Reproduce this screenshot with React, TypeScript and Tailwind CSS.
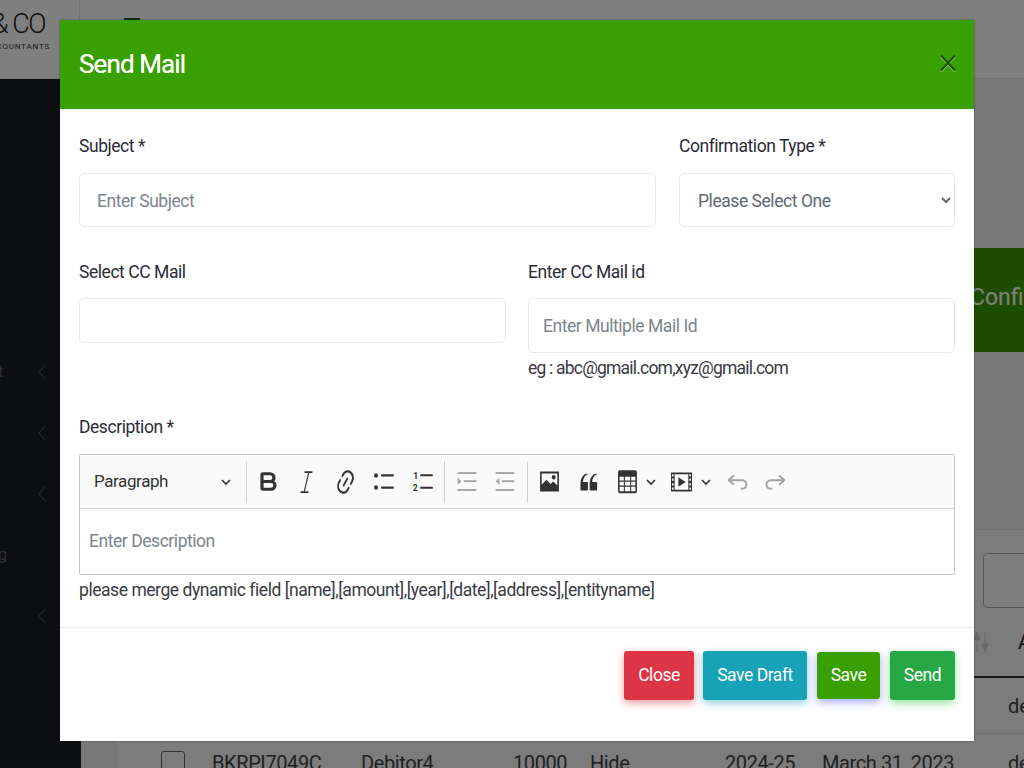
import React from "react";
import { Bold, Italic } from "lucide-react";

const F = "font-['Roboto',sans-serif]";

function Chevron() {
  return (
    <svg width="10" height="16" viewBox="0 0 10 16" fill="none" stroke="#4a4b4d" strokeWidth="1.2">
      <path d="M8 1 L2 8 L8 15" />
    </svg>
  );
}

function SideRow({ ch, arrow }: { ch: string; arrow?: boolean }) {
  return (
    <div className="flex h-[61px] items-center text-[16px] text-[#5f6062]">
      <span className="flex w-[37px] justify-start overflow-hidden">
        <span className="-ml-[2px]">{ch}</span>
      </span>
      <span className="flex">{arrow && <Chevron />}</span>
    </div>
  );
}

function Slot({ children, w = 38 }: { children: React.ReactNode; w?: number }) {
  return (
    <div className="flex h-[40px] shrink-0 items-center justify-center" style={{ width: w }}>
      {children}
    </div>
  );
}

const Sep = () => <div className="h-[42px] w-px shrink-0 bg-[#d2d2d2]" />;

function Caret() {
  return (
    <svg width="10" height="10" viewBox="0 0 10 10" fill="none" stroke="#333" strokeWidth="1.6" className="shrink-0">
      <path d="M1 3 L5 7 L9 3" />
    </svg>
  );
}

function I20({ children, c = "#333", w = 23, h = 27 }: { children: React.ReactNode; c?: string; w?: number; h?: number }) {
  return (
    <svg width={w} height={h} viewBox="0 0 20 20" fill={c} preserveAspectRatio="none">
      {children}
    </svg>
  );
}

function Toolbar() {
  return (
    <div className="flex h-[54px] items-center border-b border-[#d6d6d6] bg-[#fafafa]">
      <div className="flex w-[166px] shrink-0 items-center pl-[14px] pr-[15px] text-[17px] tracking-[-0.4px] text-[#333]">
        <span className="flex-1">Paragraph</span>
        <Caret />
      </div>
      <Sep />
      <div className="ml-[2px] flex items-center">
        <Slot><Bold width={24} height={23} preserveAspectRatio="none" strokeWidth={3.2} color="#333" /></Slot>
        <Slot w={39}><Italic width={19} height={30} preserveAspectRatio="none" strokeWidth={1.4} color="#333" /></Slot>
        <Slot>
          <I20 w={23} h={30}><path d="m11.077 15 .991-1.416a.75.75 0 1 1 1.229.86l-1.148 1.64a.748.748 0 0 1-.217.206 5.251 5.251 0 0 1-8.503-5.955.741.741 0 0 1 .12-.274l1.147-1.639a.75.75 0 1 1 1.228.86L4.933 10.7l.006.003a3.75 3.75 0 0 0 6.132 4.294l.006.004zm5.494-5.335a.748.748 0 0 1-.12.274l-1.147 1.639a.75.75 0 1 1-1.228-.86l.86-1.23a3.75 3.75 0 0 0-6.144-4.301l-.86 1.229a.75.75 0 0 1-1.229-.86l1.148-1.64a.748.748 0 0 1 .217-.206 5.251 5.251 0 0 1 8.503 5.955zm-4.563-2.532a.75.75 0 0 1 .184 1.045l-3.155 4.505a.75.75 0 1 1-1.229-.86l3.155-4.506a.75.75 0 0 1 1.045-.184z" /></I20>
        </Slot>
        <Slot w={39}>
          <I20 w={23} h={27}>
            <circle cx="3.5" cy="5.500" r="1.700" />
            <circle cx="3.500" cy="14.500" r="1.700" />
            <rect x="8" y="4.700" width="11" height="1.600" rx=".5" />
            <rect x="8" y="13.700" width="11" height="1.600" rx=".5" />
          </I20>
        </Slot>
        <Slot>
          <I20 w={23} h={25}>
            <text x="2" y="8" fontSize="7.500" fontWeight="700" fontFamily="Roboto">1</text>
            <text x="1.500" y="18" fontSize="7.500" fontWeight="700" fontFamily="Roboto">2</text>
            <rect x="8" y="4.200" width="11" height="1.600" rx=".5" />
            <rect x="8" y="14.200" width="11" height="1.600" rx=".5" />
          </I20>
        </Slot>
      </div>
      <div className="ml-[3px]"><Sep /></div>
      <div className="ml-[3px] flex items-center">
        <Slot>
          <I20 c="#a3a3a3" w={22} h={25}>
            <rect x="1.500" y="2.500" width="17" height="1.500" />
            <rect x="7" y="9" width="11.500" height="1.500" />
            <rect x="1.500" y="16" width="17" height="1.500" />
            <path d="M1.500 7 L5 9.750 L1.500 12.500 Z" />
          </I20>
        </Slot>
        <Slot>
          <I20 c="#a3a3a3" w={22} h={25}>
            <rect x="1.500" y="2.500" width="17" height="1.500" />
            <rect x="7" y="9" width="11.500" height="1.500" />
            <rect x="1.500" y="16" width="17" height="1.500" />
            <path d="M5 7 L1.500 9.750 L5 12.500 Z" />
          </I20>
        </Slot>
      </div>
      <div className="ml-[3px]"><Sep /></div>
      <div className="ml-[2px] flex items-center">
        <Slot>
          <I20 w={21} h={25}>
            <path fillRule="evenodd" d="M1 2h18v16H1z M2.500 3.500v9l4.500-4 4 3.500 2.500-2 4 3.200V3.500z" />
            <circle cx="14" cy="6.500" r="1.800" />
          </I20>
        </Slot>
        <Slot w={40}>
          <I20 w={23} h={28}><path d="M3 10.423a6.500 6.500 0 0 1 6.056-6.408l.038.67C6.448 5.423 5.354 7.663 5.220 10H9c.552 0 .5.432.5.986v4.511c0 .554-.448.503-1 .503h-5c-.552 0-.5-.449-.5-1.003v-4.574zm8 0a6.500 6.500 0 0 1 6.056-6.408l.038.67c-2.646.739-3.740 2.979-3.873 5.315H17c.552 0 .5.432.5.986v4.511c0 .554-.448.503-1 .503h-5c-.552 0-.5-.449-.5-1.003v-4.574z" /></I20>
        </Slot>
        <Slot w={38}>
          <I20 w={21} h={25.5}>
            <path fillRule="evenodd" d="M2.500 1h15A1.500 1.500 0 0 1 19 2.500v15a1.500 1.500 0 0 1-1.500 1.500h-15A1.500 1.500 0 0 1 1 17.500v-15A1.500 1.500 0 0 1 2.500 1z M2.500 6v3h4V6z M7.500 6v3h5V6z M13.500 6v3h4V6z M2.500 10v3h4v-3z M7.500 10v3h5v-3z M13.500 10v3h4v-3z M2.500 14v3.500h4V14z M7.500 14v3.500h5V14z M13.500 14v3.500h4V14z" />
          </I20>
        </Slot>
        <div className="mr-[15px] flex"><Caret /></div>
        <I20 w={21} h={24}>
          <path fillRule="evenodd" d="M0 2h20v16H0z M3.500 3.500v13h13v-13z M1 3.500v2h1.500v-2z M1 7v2h1.500V7z M1 11v2h1.500v-2z M1 14.500v2h1.500v-2z M17.500 3.500v2H19v-2z M17.500 7v2H19V7z M17.500 11v2H19v-2z M17.500 14.500v2H19v-2z" />
          <path d="M7 6 L14 10 L7 14 Z" />
        </I20>
        <div className="ml-[9px] flex"><Caret /></div>
        <div className="ml-[11px]">
          <Slot w={30}>
            <I20 c="#a3a3a3" w={25} h={26}><path d="m5.042 9.367 2.189 1.837a.75.75 0 0 1-.965 1.149l-3.788-3.18a.747.747 0 0 1-.21-.284.75.75 0 0 1 .17-.945L6.23 4.762a.75.75 0 1 1 .964 1.15L4.863 7.866h8.917A.75.75 0 0 1 14 7.9a4 4 0 1 1-1.477 7.718l.344-1.489a2.5 2.5 0 1 0 1.094-4.73l.008-.032H5.042z" /></I20>
          </Slot>
        </div>
        <div className="ml-[8px]">
          <Slot w={30}>
            <I20 c="#a3a3a3" w={25} h={26}><path d="m14.958 9.367-2.189 1.837a.75.75 0 0 0 .965 1.149l3.788-3.18a.747.747 0 0 0 .21-.284.75.75 0 0 0-.17-.945L13.77 4.762a.75.75 0 1 0-.964 1.15l2.331 1.955H6.22A.75.75 0 0 0 6 7.9a4 4 0 1 0 1.477 7.718l-.344-1.489A2.5 2.5 0 1 1 6.039 9.4l-.008-.032h8.927z" /></I20>
          </Slot>
        </div>
      </div>
    </div>
  );
}

const label = "block h-[26px] text-[17.5px] leading-[27px] tracking-[-0.45px] text-[#2b2b36]";
const field =
  "block w-full rounded-[5px] border border-[#e8e8ee] bg-white pt-[1px] text-[17.5px] tracking-[-0.45px] text-[#5f6770] outline-none placeholder:text-[#7c858d]";
const hint = "mt-[2px] h-[26px] text-[17.5px] leading-[27px] tracking-[-0.45px] text-[#3a3a42]";

function Btn({ children, cls }: { children: React.ReactNode; cls: string }) {
  return (
    <button className={`flex h-[49px] items-center justify-center rounded-[3px] text-[17.5px] tracking-[-0.45px] text-white ${cls}`}>
      {children}
    </button>
  );
}

function Modal() {
  return (
    <div className="absolute left-[60px] top-[20px] flex h-[721px] w-[914px] flex-col bg-white shadow-[0_0_2px_rgba(0,0,0,0.4)]">
      <div className="flex h-[89px] shrink-0 items-center justify-between bg-[#38a000] pl-[19px] pr-[18px]">
        <h2 className="text-[26px] font-normal tracking-[-0.9px] text-white [text-shadow:0_0_0.4px_white]">Send Mail</h2>
        <svg width="16" height="18" viewBox="0 0 16 18" fill="none" className="-mt-[3px] drop-shadow-[0_1px_0_rgba(255,255,255,0.5)]">
          <path d="M1 1.500 L15 16.500 M15 1.500 L1 16.500" stroke="#1c5000" strokeWidth="2" />
        </svg>
      </div>

      <div className="flex-1 px-[19px] pt-[24px]">
        <div className="flex gap-[23px]">
          <div className="w-[577px]">
            <label className={label}>Subject *</label>
            <input placeholder="Enter Subject" className={`${field} mt-[14px] h-[54px] pl-[17px]`} />
          </div>
          <div className="w-[276px]">
            <label className={label}>Confirmation Type *</label>
            <select className={`${field} mt-[14px] h-[54px] pl-[14px]`}>
              <option>Please Select One</option>
            </select>
          </div>
        </div>

        <div className="mt-[32px] flex gap-[22px]">
          <div className="w-[427px]">
            <label className={label}>Select CC Mail</label>
            <div className={`${field} mt-[13px] h-[45px]`} />
          </div>
          <div className="w-[427px]">
            <label className={label}>Enter CC Mail id</label>
            <input placeholder="Enter Multiple Mail Id" className={`${field} mt-[13px] h-[55px] pl-[14px]`} />
            <p className={`${hint} !tracking-[-0.8px]`}>eg : abc@gmail.com,xyz@gmail.com</p>
          </div>
        </div>

        <label className={`${label} mt-[33px]`}>Description *</label>
        <div className="mt-[14px] h-[121px] rounded-[2px] border border-[#c4c4c4]">
          <Toolbar />
          <div className="flex h-[65px] items-center pl-[9px] text-[17.5px] tracking-[-0.45px] text-[#7c858d]">Enter Description</div>
        </div>
        <p className={hint}>
          please merge dynamic field [name],[amount],[year],[date],[address],[entityname]
        </p>
      </div>

      <div className="flex h-[114px] shrink-0 items-start justify-end gap-[9px] border-t border-[#eeeeee] pr-[19px] pt-[23px]">
        <Btn cls="w-[70px] bg-[#dc3545] shadow-[0_3px_8px_rgba(220,53,69,0.5)]">Close</Btn>
        <Btn cls="w-[104px] bg-[#17a2b8] shadow-[0_3px_8px_rgba(23,162,184,0.5)]">Save Draft</Btn>
        <Btn cls="ml-[1px] w-[63px] !h-[47px] mt-[1px] bg-[#38a000] shadow-[0_3px_8px_rgba(80,90,255,0.5)]">Save</Btn>
        <Btn cls="ml-[1px] w-[65px] bg-[#28a745] shadow-[0_3px_8px_rgba(40,200,60,0.5)]">Send</Btn>
      </div>
    </div>
  );
}

function Page() {
  return (
    <div className="flex h-full flex-col">
      <header className="flex h-[79px] shrink-0 border-b border-[#e4e4e4] bg-white">
        <div className="flex h-full w-[80px] shrink-0 flex-col items-end overflow-hidden border-r border-[#e6e6e6] pr-[29px]">
          <div className="mt-[7px] whitespace-nowrap pr-[5px] text-[27px] font-light leading-[34px] tracking-[-1.5px] text-[#222]">&amp; CO</div>
          <div className="whitespace-nowrap text-[8px] leading-[12px] tracking-[0.8px] text-[#333]">COUNTANTS</div>
        </div>
        <div className="ml-[44px] mt-[18px] flex h-[20px] w-[16px] flex-col gap-[5px]">
          <span className="h-[2px] bg-[#1d6000]" />
          <span className="h-[2px] bg-[#1d6000]" />
          <span className="h-[2px] bg-[#1d6000]" />
        </div>
      </header>
      <div className="flex min-h-0 flex-1">
        <aside className="w-[81px] shrink-0 overflow-hidden bg-[#1a1d22] pt-[262px]">
          <SideRow ch="t" arrow />
          <SideRow ch="" arrow />
          <SideRow ch="" arrow />
          <SideRow ch="g" />
          <SideRow ch="" arrow />
        </aside>
        <main className="min-w-0 flex-1 overflow-hidden bg-[#f0f0f0]">
          <div className="ml-[869px] mt-[169px] flex h-[104px] w-[200px] items-center bg-[#3a9c00] pb-[4px] pl-[20px] text-[23px] text-white">
            Confirmation
          </div>
          <section className="ml-[36px] mt-[177px] w-[1000px] border-t border-[#e2e2e2] bg-[#f8f8f8]">
            <div className="ml-[866px] mt-[23px] h-[55px] w-[140px] rounded-[5px] border border-[#aaaaaa] bg-white" />
            <div className="flex h-[70px] items-center border-b-2 border-[#333] pl-[854px] text-[20px] text-[#222]">
              <svg width="20" height="24" viewBox="0 0 20 24" fill="#cfcfcf">
                <path d="M6 2 L9 10 H3 Z M6 22 V10 M14 22 L11 14 H17 Z M14 2 V14" stroke="#cfcfcf" />
              </svg>
              <span className="ml-[27px]">Amount</span>
            </div>
            <div className="flex h-[56px] items-center border-b border-[#dddddd] pl-[891px] text-[20px] text-[#444]">delete</div>
            <div className="flex h-[56px] items-center pl-[44px] pt-[1px] text-[20px] tracking-[-0.4px] text-[#444]">
              <span className="h-[24px] w-[24px] shrink-0 rounded-[3px] border border-[#666]" />
              <span className="ml-[27px] w-[149px] shrink-0">BKRPI7049C</span>
              <span className="w-[152px] shrink-0">Debitor4</span>
              <span className="w-[77px] shrink-0">10000</span>
              <span className="w-[135px] shrink-0">Hide</span>
              <span className="w-[97px] shrink-0">2024-25</span>
              <span className="w-[186px] shrink-0 whitespace-nowrap">March 31, 2023</span>
              <span>delete</span>
            </div>
          </section>
        </main>
      </div>
    </div>
  );
}

export default function App() {
  return (
    <div className={`relative h-[768px] w-[1024px] overflow-hidden ${F}`}>
      <Page />
      <div className="absolute inset-0 bg-black/50" />
      <Modal />
    </div>
  );
}
